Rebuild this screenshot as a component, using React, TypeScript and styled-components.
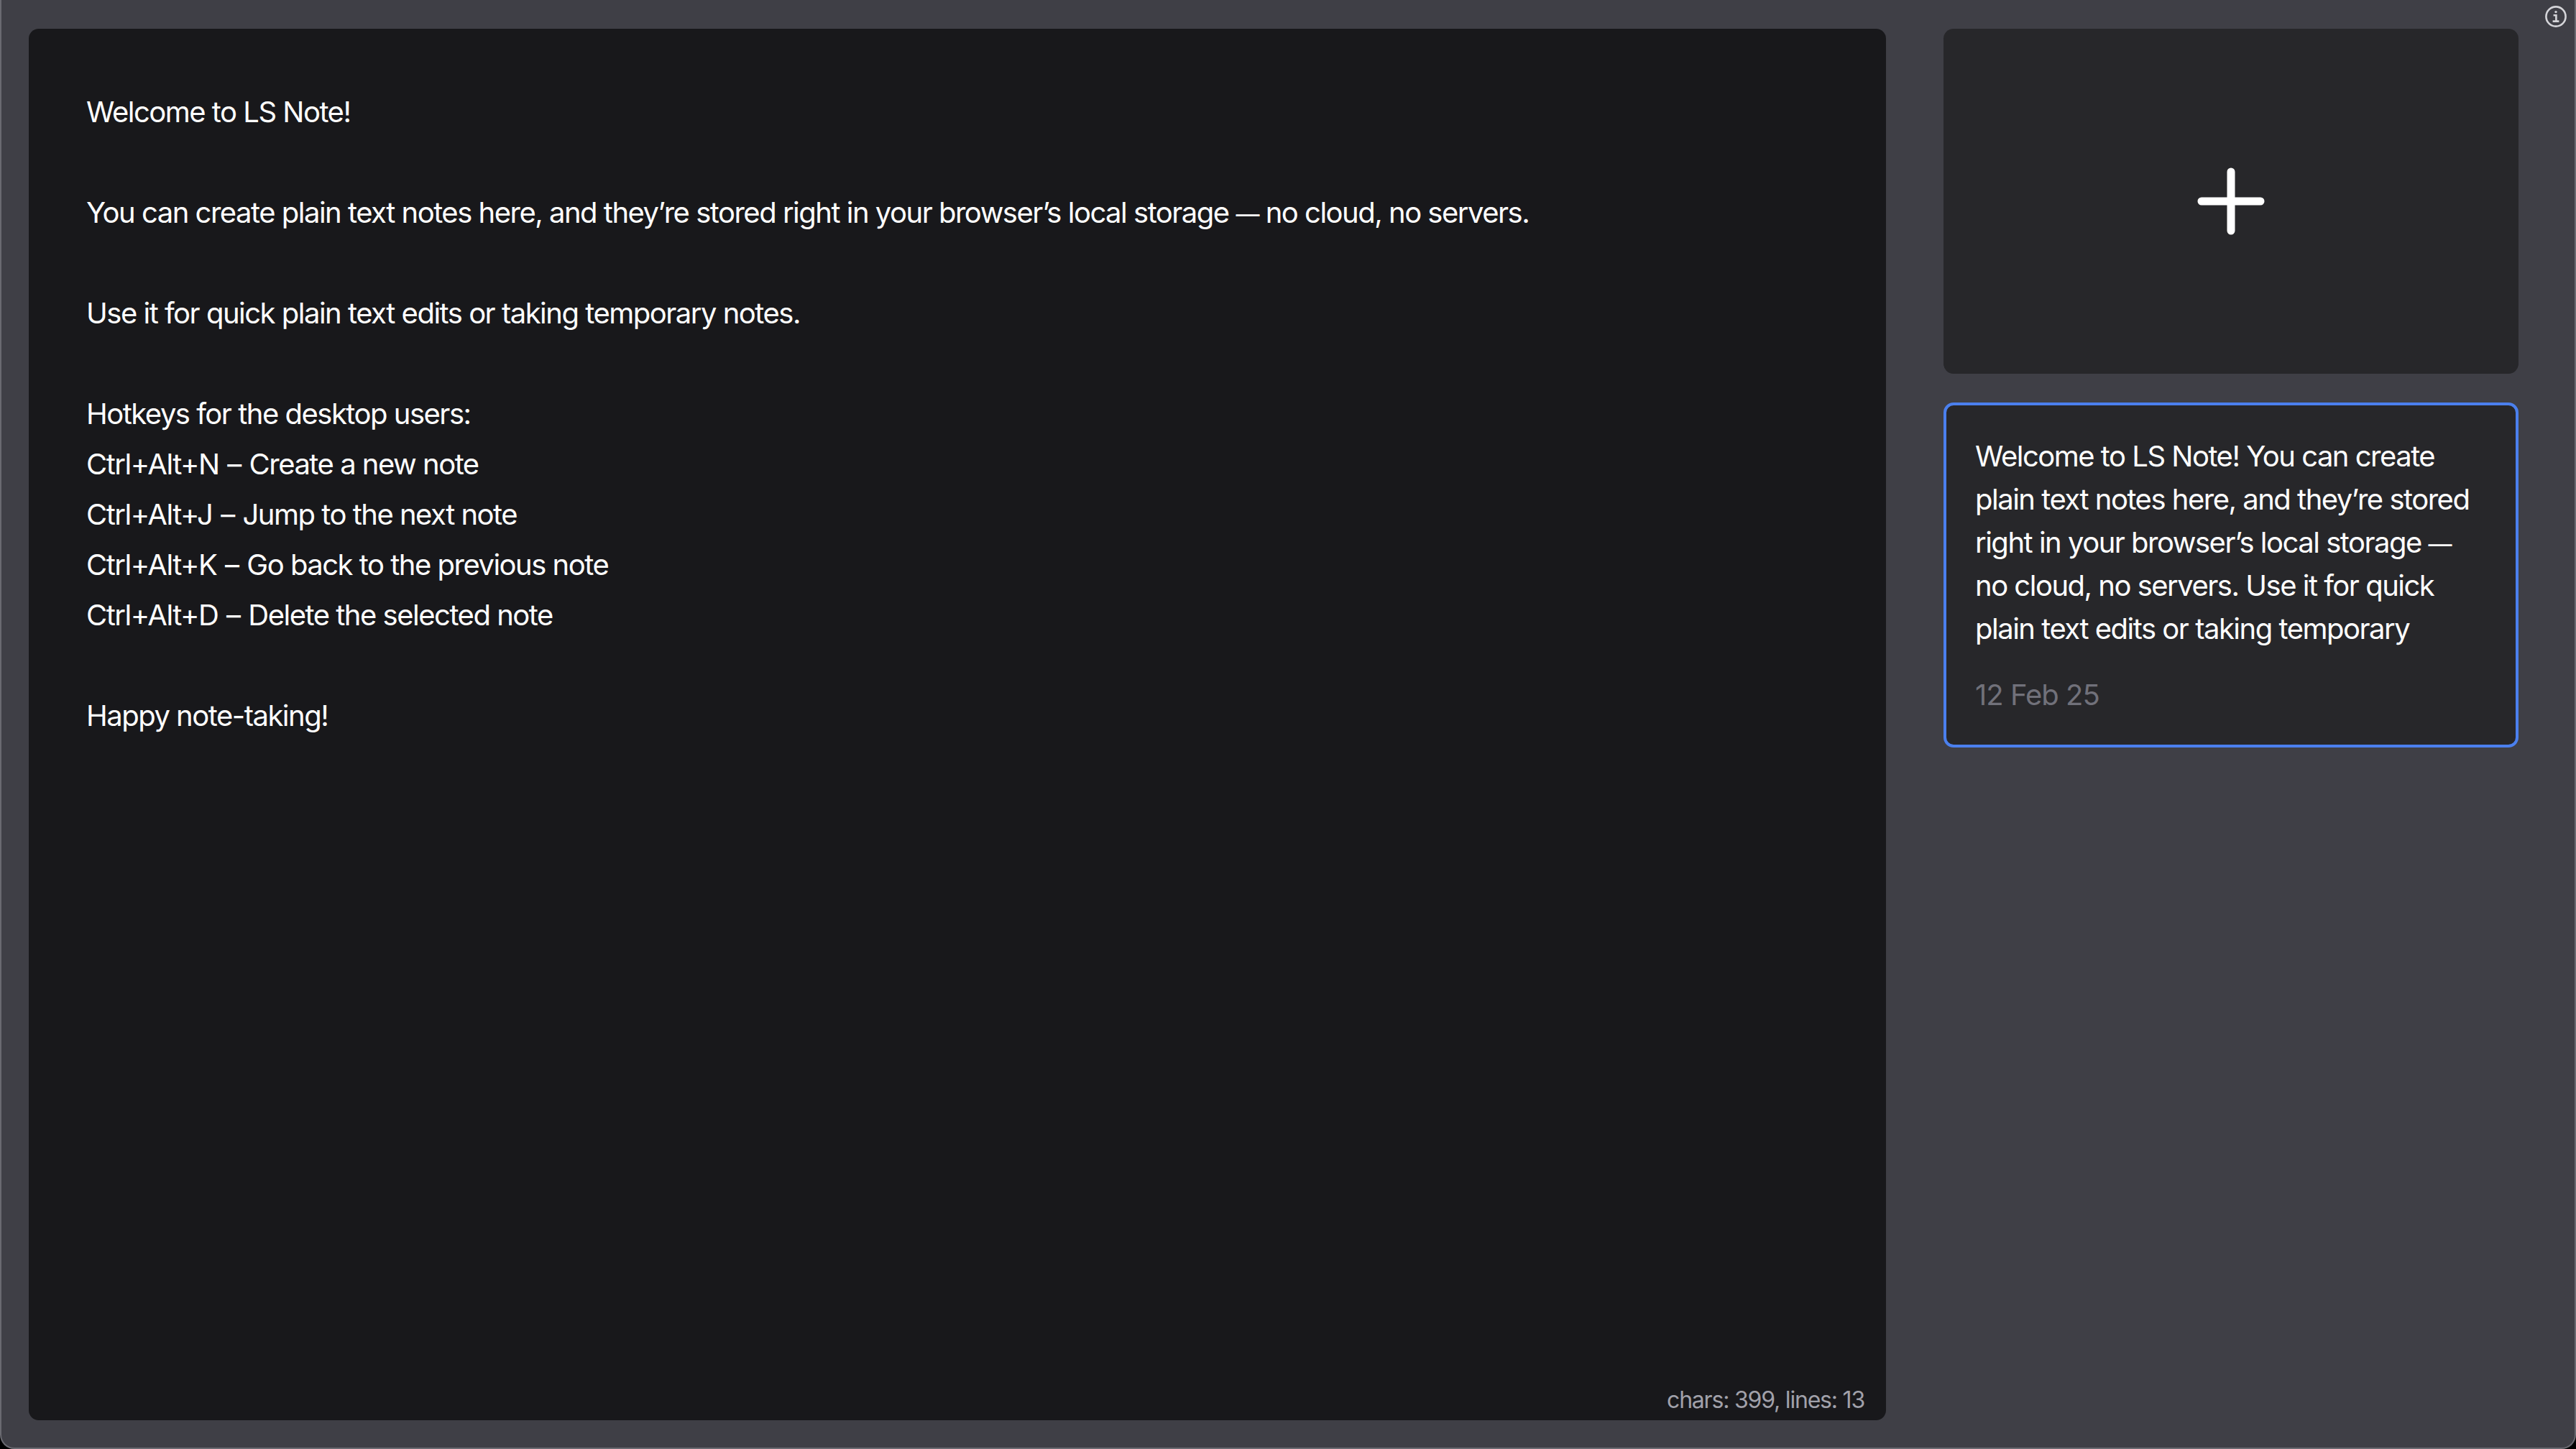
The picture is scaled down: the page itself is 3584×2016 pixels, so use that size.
import { createGlobalStyle, styled } from 'styled-components'

const GlobalStyle = createGlobalStyle`
  html, body {
    margin: 0;
    padding: 0;
    background: #000;
  }
  body {
    font-family: Inter, "Liberation Sans", sans-serif;
    -webkit-font-smoothing: antialiased;
  }
`

const noteLines = [
  'Welcome to LS Note!',
  '',
  'You can create plain text notes here, and they’re stored right in your browser’s local storage — no cloud, no servers.',
  '',
  'Use it for quick plain text edits or taking temporary notes.',
  '',
  'Hotkeys for the desktop users:',
  'Ctrl+Alt+N – Create a new note',
  'Ctrl+Alt+J – Jump to the next note',
  'Ctrl+Alt+K – Go back to the previous note',
  'Ctrl+Alt+D – Delete the selected note',
  '',
  'Happy note-taking!',
]

const preview = [
  'Welcome to LS Note! You can create',
  'plain text notes here, and they’re stored',
  'right in your browser’s local storage —',
  'no cloud, no servers. Use it for quick',
  'plain text edits or taking temporary',
]

// the dashes are drawn a bit differently from Inter's, so they get their own span
function withDashes(text: string) {
  return text.split(/([–—])/).map((part, i) =>
    part === '—' ? (
      <EmDash key={i}>{part}</EmDash>
    ) : part === '–' ? (
      <EnDash key={i}>{part}</EnDash>
    ) : (
      part
    )
  )
}

function InfoIcon() {
  return (
    <svg width="32" height="32" viewBox="0 0 32 32" fill="none" stroke="#d4d4d8" strokeWidth="2.6">
      <circle cx="16" cy="16" r="13.6" />
      <circle cx="16" cy="9.6" r="1.7" fill="#d4d4d8" stroke="none" />
      <path d="M12.6 14.2H16.4V22.6M11.6 22.6H20.4" />
    </svg>
  )
}

function PlusIcon() {
  return (
    <svg width="96" height="96" viewBox="0 0 96 96" fill="none" stroke="#fff" strokeWidth="11" strokeLinecap="round">
      <path d="M48 7V89M7 48H89" />
    </svg>
  )
}

export default function App() {
  return (
    <>
      <GlobalStyle />
      <Page>
        <InfoButton>
          <InfoIcon />
        </InfoButton>
        <Editor>
          {noteLines.map((line, i) => (
            <EditorLine key={i}>{withDashes(line)}</EditorLine>
          ))}
          <Counter>chars: 399, lines: 13</Counter>
        </Editor>
        <Sidebar>
          <NewNote>
            <PlusIcon />
          </NewNote>
          <NoteCard $active>
            <Preview>
              {preview.map((line) => (
                <div key={line}>{withDashes(line)}</div>
              ))}
            </Preview>
            <NoteDate>12 Feb 25</NoteDate>
          </NoteCard>
        </Sidebar>
      </Page>
    </>
  )
}

const Page = styled.div`
  position: relative;
  box-sizing: border-box;
  width: 3584px;
  height: 2016px;
  display: flex;
  gap: 80px;
  padding: 40px 78px 38px 38px;
  background: #3f3f46;
  border: 2px solid #6a6a71;
  border-top: 0;
  border-radius: 0 0 20px 20px;
  overflow: hidden;
`
const InfoButton = styled.div`
  position: absolute;
  top: 7px;
  right: 10px;
  width: 32px;
  height: 32px;
`
const Editor = styled.main`
  position: relative;
  flex: 1;
  box-sizing: border-box;
  padding: 81px 80px 80px;
  background: #18181b;
  border-radius: 14px;
  color: #fff;
`
const EditorLine = styled.div`
  min-height: 70px;
  font-size: 40px;
  line-height: 70px;
  letter-spacing: -1.5px;
  white-space: nowrap;
`
const EmDash = styled.span`
  font-size: 33px;
  line-height: 1;
`
const EnDash = styled.span`
  padding: 0 2px;
`
const Counter = styled.div`
  position: absolute;
  right: 30px;
  bottom: 8px;
  font-size: 32px;
  line-height: 40px;
  letter-spacing: -1.2px;
  color: #a1a1aa;
`
const Sidebar = styled.aside`
  width: 800px;
  display: flex;
  flex-direction: column;
  gap: 40px;
`
const NewNote = styled.button`
  height: 480px;
  display: flex;
  align-items: center;
  justify-content: center;
  padding: 0;
  border: 0;
  border-radius: 14px;
  background: #27272a;
`
const NoteCard = styled.div<{ $active?: boolean }>`
  box-sizing: border-box;
  height: 480px;
  padding: 41px 40px 40px;
  background: #27272a;
  border: 4px solid ${(p) => (p.$active ? '#4b80ee' : 'transparent')};
  border-radius: 14px;
`
const Preview = styled.div`
  font-size: 40px;
  line-height: 60px;
  letter-spacing: -1.5px;
  color: #fff;
  white-space: nowrap;
`
const NoteDate = styled.div`
  margin-top: 32px;
  font-size: 40px;
  line-height: 60px;
  letter-spacing: -1px;
  color: #71717a;
`
